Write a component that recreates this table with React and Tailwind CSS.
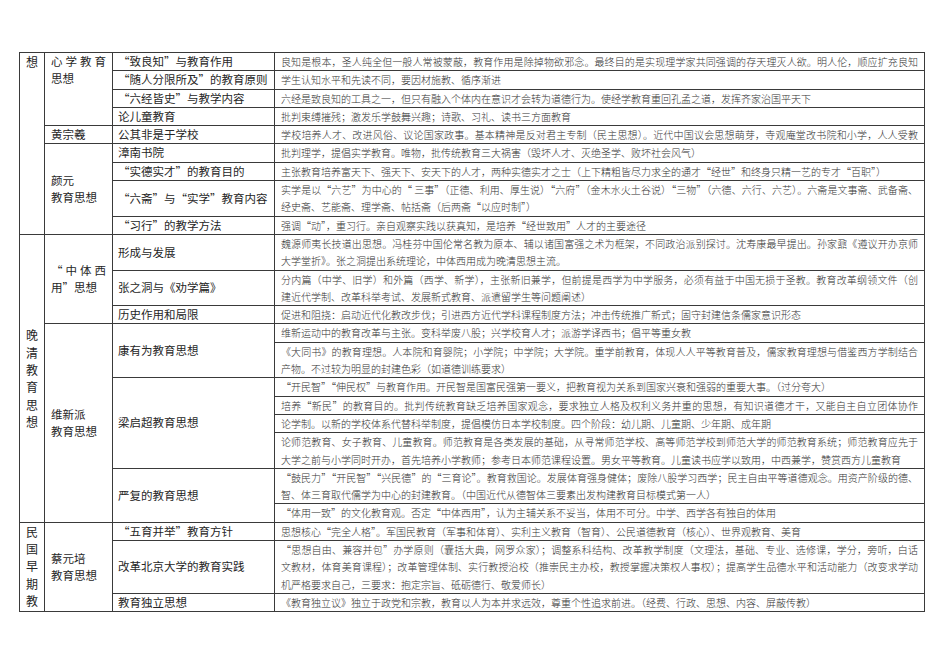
import React from "react";

const c1 = "border border-[#3a3a3a] p-0 text-center text-[12px] leading-[17.3px]";
const c2 = "border border-[#3a3a3a] px-[6px] py-0 text-[11.5px] leading-[17.3px] align-middle";
const c3 = "border border-[#3a3a3a] px-[5px] py-0 text-[11.5px] leading-[17.3px] align-middle whitespace-nowrap overflow-hidden";

function Era({ text }) {
  return text.split("").map((ch, i) => <div key={i}>{ch}</div>);
}

// right column: every line but the last is justified (wrapped lines in the source)
function Desc({ lines, justifyLast = false }) {
  return (
    <td className="border border-[#3a3a3a] px-[6px] py-0 align-middle text-[10px] leading-[17.3px] text-[#333] font-light overflow-hidden">
      {lines.map((line, i) => {
        const j = i < lines.length - 1 || justifyLast;
        return (
          <div key={i} className={j ? "text-justify [text-align-last:justify]" : "whitespace-nowrap"}>
            {line}
          </div>
        );
      })}
    </td>
  );
}

export default function App() {
  return (
    <div className="min-h-screen bg-white pt-[52px] pl-[19px] font-['Noto_Sans_CJK_SC',sans-serif] text-[#262626]">
      <table className="table-fixed border-collapse w-[906px]">
        <colgroup>
          <col className="w-[25px]" />
          <col className="w-[68px]" />
          <col className="w-[162px]" />
          <col />
        </colgroup>
        <tbody>
          <tr>
            <td rowSpan={9} className={c1 + " align-top"}>
              <Era text="想" />
            </td>
            <td rowSpan={4} className={c2 + " !align-top"}>
              <div className="text-justify [text-align-last:justify]">心学教育</div>
              <div>思想</div>
            </td>
            <td className={c3}>“致良知”与教育作用</td>
            <Desc
              justifyLast
              lines={["良知是根本，圣人纯全但一般人常被蒙蔽，教育作用是除掉物欲邪念。最终目的是实现理学家共同强调的存天理灭人欲。明人伦，顺应扩充良知"]}
            />
          </tr>
          <tr>
            <td className={c3}>“随人分限所及”的教育原则</td>
            <Desc lines={["学生认知水平和先读不同，要因材施教、循序渐进"]} />
          </tr>
          <tr>
            <td className={c3}>“六经皆史”与教学内容</td>
            <Desc lines={["六经是致良知的工具之一，但只有融入个体内在意识才会转为道德行为。使经学教育重回孔孟之道，发挥齐家治国平天下"]} />
          </tr>
          <tr>
            <td className={c3}>论儿童教育</td>
            <Desc lines={["批判束缚摧残；激发乐学鼓舞兴趣；诗歌、习礼、读书三方面教育"]} />
          </tr>
          <tr>
            <td className={c2}>黄宗羲</td>
            <td className={c3}>公其非是于学校</td>
            <Desc
              justifyLast
              lines={["学校培养人才、改进风俗、议论国家政事。基本精神是反对君主专制（民主思想）。近代中国议会思想萌芽，寺观庵堂改书院和小学，人人受教"]}
            />
          </tr>
          <tr>
            <td rowSpan={4} className={c2}>
              <div>颜元</div>
              <div>教育思想</div>
            </td>
            <td className={c3}>漳南书院</td>
            <Desc lines={["批判理学，提倡实学教育。唯物，批传统教育三大祸害（毁坏人才、灭绝圣学、败坏社会风气）"]} />
          </tr>
          <tr>
            <td className={c3}>“实德实才”的教育目的</td>
            <Desc lines={["主张教育培养富天下、强天下、安天下的人才，两种实德实才之士（上下精粗皆尽力求全的通才“经世”和终身只精一艺的专才“百职”）"]} />
          </tr>
          <tr>
            <td className={c3}>“六斋”与“实学”教育内容</td>
            <Desc
              lines={[
                "实学是以“六艺”为中心的“ 三事”（正德、利用、厚生说）“六府”（金木水火土谷说）“三物”（六德、六行、六艺）。六斋是文事斋、武备斋、",
                "经史斋、艺能斋、理学斋、帖括斋（后两斋“以应时制”）",
              ]}
            />
          </tr>
          <tr>
            <td className={c3}>“习行”的教学方法</td>
            <Desc lines={["强调“动”，重习行。亲自观察实践以获真知，是培养“经世致用”人才的主要途径"]} />
          </tr>
          <tr>
            <td rowSpan={11} className={c1 + " align-middle"}>
              <Era text="晚清教育思想" />
            </td>
            <td rowSpan={3} className={c2}>
              <div className="text-justify [text-align-last:justify]">“中体西</div>
              <div>用”思想</div>
            </td>
            <td className={c3}>形成与发展</td>
            <Desc
              lines={[
                "魏源师夷长技道出思想。冯桂芬中国伦常名教为原本、辅以诸国富强之术为框架，不同政治派别探讨。沈寿康最早提出。孙家鼐《遵议开办京师",
                "大学堂折》。张之洞提出系统理论，中体西用成为晚清思想主流。",
              ]}
            />
          </tr>
          <tr>
            <td className={c3}>张之洞与《劝学篇》</td>
            <Desc
              lines={[
                "分内篇（中学、旧学）和外篇（西学、新学），主张新旧兼学，但前提是西学为中学服务，必须有益于中国无损于圣教。教育改革纲领文件（创",
                "建近代学制、改革科举考试、发展新式教育、派遣留学生等问题阐述）",
              ]}
            />
          </tr>
          <tr>
            <td className={c3}>历史作用和局限</td>
            <Desc lines={["促进和阻挠：启动近代化教改步伐；引进西方近代学科课程制度方法；冲击传统推广新式；固守封建信条儒家意识形态"]} />
          </tr>
          <tr>
            <td rowSpan={8} className={c2}>
              <div>维新派</div>
              <div>教育思想</div>
            </td>
            <td rowSpan={2} className={c3}>康有为教育思想</td>
            <Desc lines={["维新运动中的教育改革与主张。变科举废八股；兴学校育人才；派游学译西书；倡平等重女教"]} />
          </tr>
          <tr>
            <Desc
              lines={[
                "《大同书》的教育理想。人本院和育婴院；小学院；中学院；大学院。重学前教育，体现人人平等教育普及，儒家教育理想与借鉴西方学制结合",
                "产物。不过较为明显的封建色彩（如道德训练要求）",
              ]}
            />
          </tr>
          <tr>
            <td rowSpan={4} className={c3}>梁启超教育思想</td>
            <Desc lines={["“开民智”“伸民权”与教育作用。开民智是国富民强第一要义，把教育视为关系到国家兴衰和强弱的重要大事。（过分夸大）"]} />
          </tr>
          <tr>
            <Desc
              justifyLast
              lines={["培养“新民”的教育目的。批判传统教育缺乏培养国家观念，要求独立人格及权利义务并重的思想，有知识道德才干，又能自主自立团体协作"]}
            />
          </tr>
          <tr>
            <Desc lines={["论学制。以新的学校体系代替科举制度，提倡模仿日本学校制度。四个阶段：幼儿期、儿童期、少年期、成年期"]} />
          </tr>
          <tr>
            <Desc
              lines={[
                "论师范教育、女子教育、儿童教育。师范教育是各类发展的基础，从寻常师范学校、高等师范学校到师范大学的师范教育系统；师范教育应先于",
                "大学之前与小学同时开办，首先培养小学教师；参考日本师范课程设置。男女平等教育。儿童读书应学以致用，中西兼学，赞赏西方儿童教育",
              ]}
            />
          </tr>
          <tr>
            <td rowSpan={2} className={c3}>严复的教育思想</td>
            <Desc
              lines={[
                "“鼓民力”“开民智”“兴民德”的“三育论”。教育救国论。发展体育强身健体；废除八股学习西学；民主自由平等道德观念。用资产阶级的德、",
                "智、体三育取代儒学为中心的封建教育。（中国近代从德智体三要素出发构建教育目标模式第一人）",
              ]}
            />
          </tr>
          <tr>
            <Desc lines={["“体用一致”的文化教育观。否定“中体西用”，认为主辅关系不妥当，体用不可分。中学、西学各有独自的体用"]} />
          </tr>
          <tr>
            <td rowSpan={3} className={c1 + " align-top"}>
              <Era text="民国早期教" />
            </td>
            <td rowSpan={3} className={c2}>
              <div>蔡元培</div>
              <div>教育思想</div>
            </td>
            <td className={c3}>“五育并举”教育方针</td>
            <Desc lines={["思想核心“完全人格”。军国民教育（军事和体育）、实利主义教育（智育）、公民道德教育（核心）、世界观教育、美育"]} />
          </tr>
          <tr>
            <td className={c3}>改革北京大学的教育实践</td>
            <Desc
              lines={[
                "“思想自由、兼容并包”办学原则（囊括大典，网罗众家）；调整系科结构、改革教学制度（文理法，基础、专业、选修课，学分，旁听，白话",
                "文教材，体育美育课程）；改革管理体制、实行教授治校（推崇民主办校，教授掌握决策权人事权）；提高学生品德水平和活动能力（改变求学动",
                "机严格要求自己，三要求：抱定宗旨、砥砺德行、敬爱师长）",
              ]}
            />
          </tr>
          <tr>
            <td className={c3}>教育独立思想</td>
            <Desc lines={["《教育独立议》独立于政党和宗教，教育以人为本并求远效，尊重个性追求前进。（经费、行政、思想、内容、屏蔽传教）"]} />
          </tr>
        </tbody>
      </table>
    </div>
  );
}
